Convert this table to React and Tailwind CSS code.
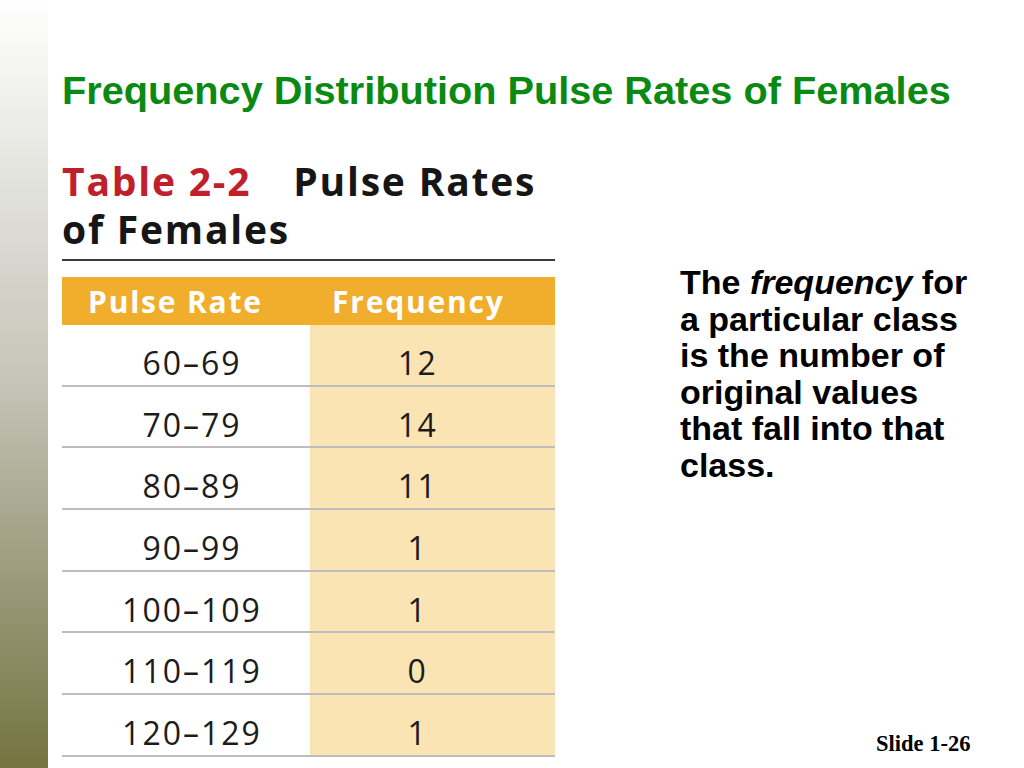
import React from "react";

const rows = [
  ["60–69", "12"],
  ["70–79", "14"],
  ["80–89", "11"],
  ["90–99", "1"],
  ["100–109", "1"],
  ["110–119", "0"],
  ["120–129", "1"],
];

export default function App() {
  return (
    <div className="flex w-[1024px] h-[768px] bg-white overflow-hidden">
      <div className="w-[48px] h-full shrink-0 bg-linear-to-b from-[#ffffff] via-[#c4c4b8] to-[#767440]" />
      <div className="relative flex-1 flex flex-col pl-[14px]">
        <h1
          className="mt-[64px] text-[39.7px] leading-[52px] font-bold text-[#0a8a12] whitespace-nowrap"
          style={{ fontFamily: '"Liberation Sans", Arial, sans-serif' }}
        >
          Frequency Distribution Pulse Rates of Females
        </h1>
        <div className="flex mt-[41px]">
          <div className="w-[493px] shrink-0 flex flex-col">
            <div
              className="text-[39px] leading-[48px] font-bold tracking-[1.8px] text-[#161616]"
              style={{ fontFamily: '"Open Sans", sans-serif' }}
            >
              <div className="whitespace-nowrap">
                <span className="text-[#c0202c]">Table 2-2</span>
                <span className="ml-[42px]">Pulse Rates</span>
              </div>
              <div>of Females</div>
            </div>
            <div className="mt-[6px] h-[2px] bg-[#3a3a3a]" />
            <div
              className="mt-[16px]"
              style={{ fontFamily: '"Open Sans", sans-serif' }}
            >
              <div className="flex h-[48px] bg-[#f0ae2c] text-white font-bold text-[30px] tracking-[1.8px] items-center">
                <div className="w-[248px] pl-[26px] whitespace-nowrap">Pulse Rate</div>
                <div className="flex-1 pl-[22px] whitespace-nowrap">Frequency</div>
              </div>
              {rows.map(([a, b]) => (
                <div
                  key={a}
                  className="flex h-[61.7px] border-b-2 border-[#bdbdbd] text-[32px] text-[#1c1c1c]"
                >
                  <div className="w-[248px] flex items-center justify-center pl-[12px] pt-[16px] tracking-[2px]">
                    {a}
                  </div>
                  <div className="flex-1 bg-[#fbe4b3] flex items-center justify-center pr-[30px] pt-[16px] tracking-[1.5px]">
                    {b}
                  </div>
                </div>
              ))}
            </div>
          </div>
          <div
            className="ml-[125px] mt-[107px] text-[34px] leading-[36.6px] font-bold text-black whitespace-nowrap"
            style={{ fontFamily: '"Liberation Sans", Arial, sans-serif' }}
          >
            The <i>frequency</i> for
            <br />a particular class
            <br />is the number of
            <br />original values
            <br />that fall into that
            <br />class.
          </div>
        </div>
        <div
          className="absolute left-[828px] top-[727px] text-[22.5px] font-bold text-black whitespace-nowrap"
          style={{ fontFamily: '"Liberation Serif", "Times New Roman", serif' }}
        >
          Slide 1-26
        </div>
      </div>
    </div>
  );
}
